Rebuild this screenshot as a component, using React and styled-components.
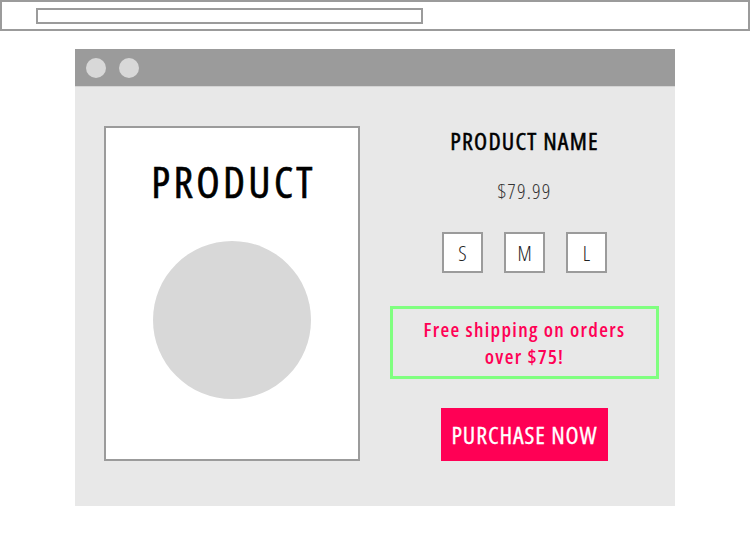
import styled, { createGlobalStyle } from 'styled-components'

const GlobalStyle = createGlobalStyle`
	body {
		margin: 0;
		background: #ffffff;
		font-family: "Open Sans", "Liberation Sans Narrow", "DejaVu Sans Condensed", sans-serif;
		font-stretch: 75%;
	}
	* { box-sizing: border-box; }
`

const sizes = ['S', 'M', 'L']

const App = () => {
	return (
		<>
			<GlobalStyle />
			<AddressBar>
				<UrlField />
			</AddressBar>

			<Window>
				<TitleBar>
					<Dot />
					<Dot />
				</TitleBar>

				<Body>
					<ProductCard>
						<CardTitle>PRODUCT</CardTitle>
						<Photo />
					</ProductCard>

					<Details>
						<Name>PRODUCT NAME</Name>
						<Price>$79.99</Price>

						<Sizes>
							{sizes.map((s) => (
								<SizeBox key={s}>{s}</SizeBox>
							))}
						</Sizes>

						<Shipping>Free shipping on orders over $75!</Shipping>

						<Purchase>PURCHASE NOW</Purchase>
					</Details>
				</Body>
			</Window>
		</>
	)
}

export default App

const AddressBar = styled.div`
	width: 750px;
	height: 31px;
	border: 2px solid #9b9b9b;
	padding: 6px 0 0 34px;
`

const UrlField = styled.div`
	width: 387px;
	height: 16px;
	border: 2px solid #9b9b9b;
`

const Window = styled.div`
	width: 600px;
	margin: 18px 0 0 75px;
	background: #e8e8e8;
`

const TitleBar = styled.div`
	height: 38px;
	background: #9b9b9b;
	border-bottom: 1px solid #d4d4d4;
	display: flex;
	align-items: center;
	gap: 13px;
	padding-left: 11px;
`

const Dot = styled.span`
	width: 20px;
	height: 20px;
	border-radius: 50%;
	background: #d8d8d8;
`

const Body = styled.div`
	display: flex;
	padding: 39px 16px 45px 29px;
	gap: 30px;
`

const ProductCard = styled.div`
	width: 256px;
	height: 335px;
	background: #ffffff;
	border: 2px solid #9b9b9b;
	display: flex;
	flex-direction: column;
	align-items: center;
`

const CardTitle = styled.h1`
	margin: 25px 0 0;
	font-size: 43px;
	font-weight: 500;
	line-height: 58px;
	color: #000;
	letter-spacing: 3.3px;
	padding-left: 3px;
	-webkit-text-stroke: 0.6px #000;
`

const Photo = styled.div`
	width: 158px;
	height: 158px;
	margin-top: 30px;
	border-radius: 50%;
	background: #d8d8d8;
`

const Details = styled.div`
	flex: 1;
	display: flex;
	flex-direction: column;
	align-items: center;
`

const Name = styled.h2`
	margin: 0;
	font-size: 24px;
	font-weight: 500;
	line-height: 30px;
	color: #000;
	letter-spacing: 1.2px;
	-webkit-text-stroke: 0.5px #000;
`

const Price = styled.div`
	margin-top: 21px;
	font-size: 21px;
	font-weight: 300;
	line-height: 28px;
	color: #333;
	letter-spacing: 1.2px;
`

const Sizes = styled.div`
	display: flex;
	gap: 21px;
	margin-top: 27px;
`

const SizeBox = styled.div`
	width: 41px;
	height: 41px;
	background: #ffffff;
	border: 2px solid #9b9b9b;
	display: flex;
	align-items: center;
	justify-content: center;
	font-size: 21px;
	font-weight: 300;
	color: #222;
`

const Shipping = styled.div`
	align-self: stretch;
	margin-top: 33px;
	height: 73px;
	border: 3px solid #80ff80;
	display: flex;
	align-items: center;
	justify-content: center;
	text-align: center;
	padding: 0 24px;
	font-size: 20px;
	font-weight: 600;
	line-height: 27px;
	color: #ff0055;
	letter-spacing: 1.3px;
`

const Purchase = styled.button`
	margin-top: 29px;
	width: 167px;
	height: 53px;
	border: none;
	background: #ff0055;
	color: #ffffff;
	font-family: inherit;
	font-stretch: 75%;
	font-size: 24px;
	font-weight: 500;
	letter-spacing: 0.9px;
	padding: 0;
	-webkit-text-stroke: 0.3px #fff;
`
